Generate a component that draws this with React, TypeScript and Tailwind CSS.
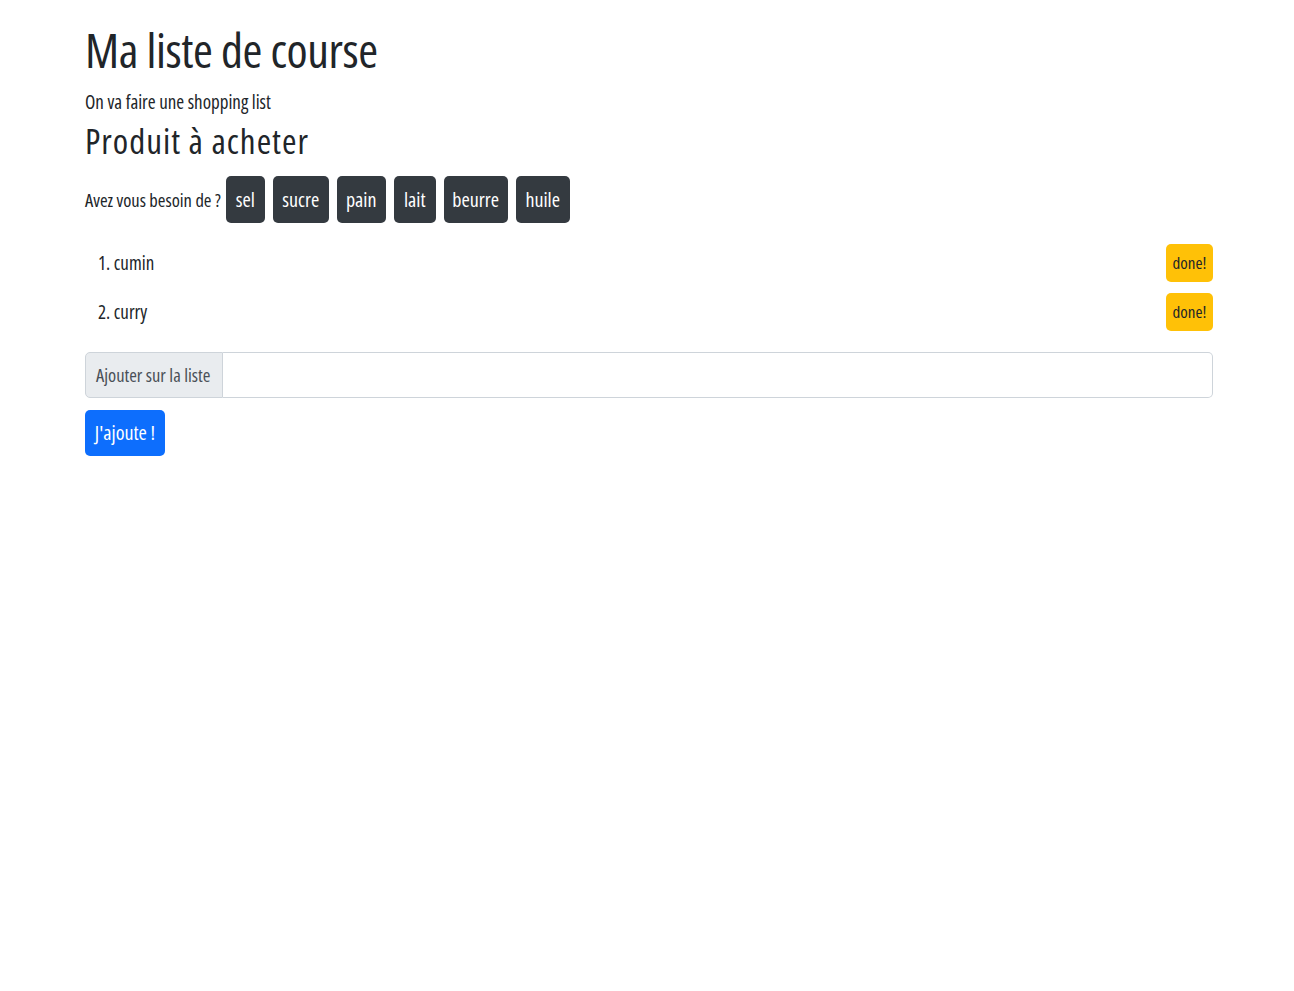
import { useState } from "react";

const suggestions = ["sel", "sucre", "pain", "lait", "beurre", "huile"];
const widths: Record<string, string> = {
  sel: "w-[39px]",
  sucre: "w-[56px]",
  pain: "w-[49px]",
  lait: "w-[42px]",
  beurre: "w-[64px]",
  huile: "w-[54px]",
};

const App = () => {
  const [items, setItems] = useState<string[]>(["cumin", "curry"]);
  const [draft, setDraft] = useState<string>("");

  const add = (name: string) => {
    if (!name.trim()) return;
    setItems(prev => [...prev, name.trim()]);
    setDraft("");
  };

  return (
    <div className="min-h-screen bg-white text-[#212529] font-['Open_Sans',sans-serif] font-stretch-condensed">
      <div className="ml-[85px] w-[1128px] pt-[22px]">
        <h1 className="text-[48px] font-medium leading-[56px] tracking-[-0.4px]">Ma liste de course</h1>
        <p className="mt-[12px] text-[19px] leading-[24px]">On va faire une shopping list</p>
        <h2 className="mt-[7px] text-[35px] font-medium leading-[40px] tracking-[1px]">Produit à acheter</h2>

        <div className="mt-[15px] flex items-center gap-[8px]">
          <span className="mr-[-3px] text-[18.5px]">Avez vous besoin de ?</span>
          {suggestions.map(s => (
            <button
              key={s}
              onClick={() => add(s)}
              className={`${widths[s]} h-[47px] rounded-[5px] bg-[#343a40] text-[20px] text-white`}
            >
              {s}
            </button>
          ))}
        </div>

        <ol className="mt-[21px] flex flex-col gap-[11px]">
          {items.map((item, i) => (
            <li key={item + i} className="flex h-[38px] items-center justify-between pl-[13px]">
              <span className="text-[19px]">{i + 1}. {item}</span>
              <button
                onClick={() => setItems(prev => prev.filter((_, j) => j !== i))}
                className="h-[38px] w-[47px] rounded-[5px] bg-[#ffc107] text-[17px] text-[#212529]"
              >
                done!
              </button>
            </li>
          ))}
        </ol>

        <div className="mt-[21px] flex h-[46px]">
          <span className="flex w-[138px] items-center rounded-l-[5px] border border-[#ced4da] bg-[#e9ecef] pl-[10px] text-[18.5px] text-[#495057]">
            Ajouter sur la liste
          </span>
          <input
            value={draft}
            onChange={e => setDraft(e.target.value)}
            className="min-w-0 flex-1 rounded-r-[5px] border border-l-0 border-[#ced4da] px-3 text-[19px] outline-none"
          />
        </div>

        <button
          onClick={() => add(draft)}
          className="mt-[12px] h-[46px] w-[80px] rounded-[5px] bg-[#0d6efd] text-[20px] text-white"
        >
          J'ajoute !
        </button>
      </div>
    </div>
  );
};

export default App;
